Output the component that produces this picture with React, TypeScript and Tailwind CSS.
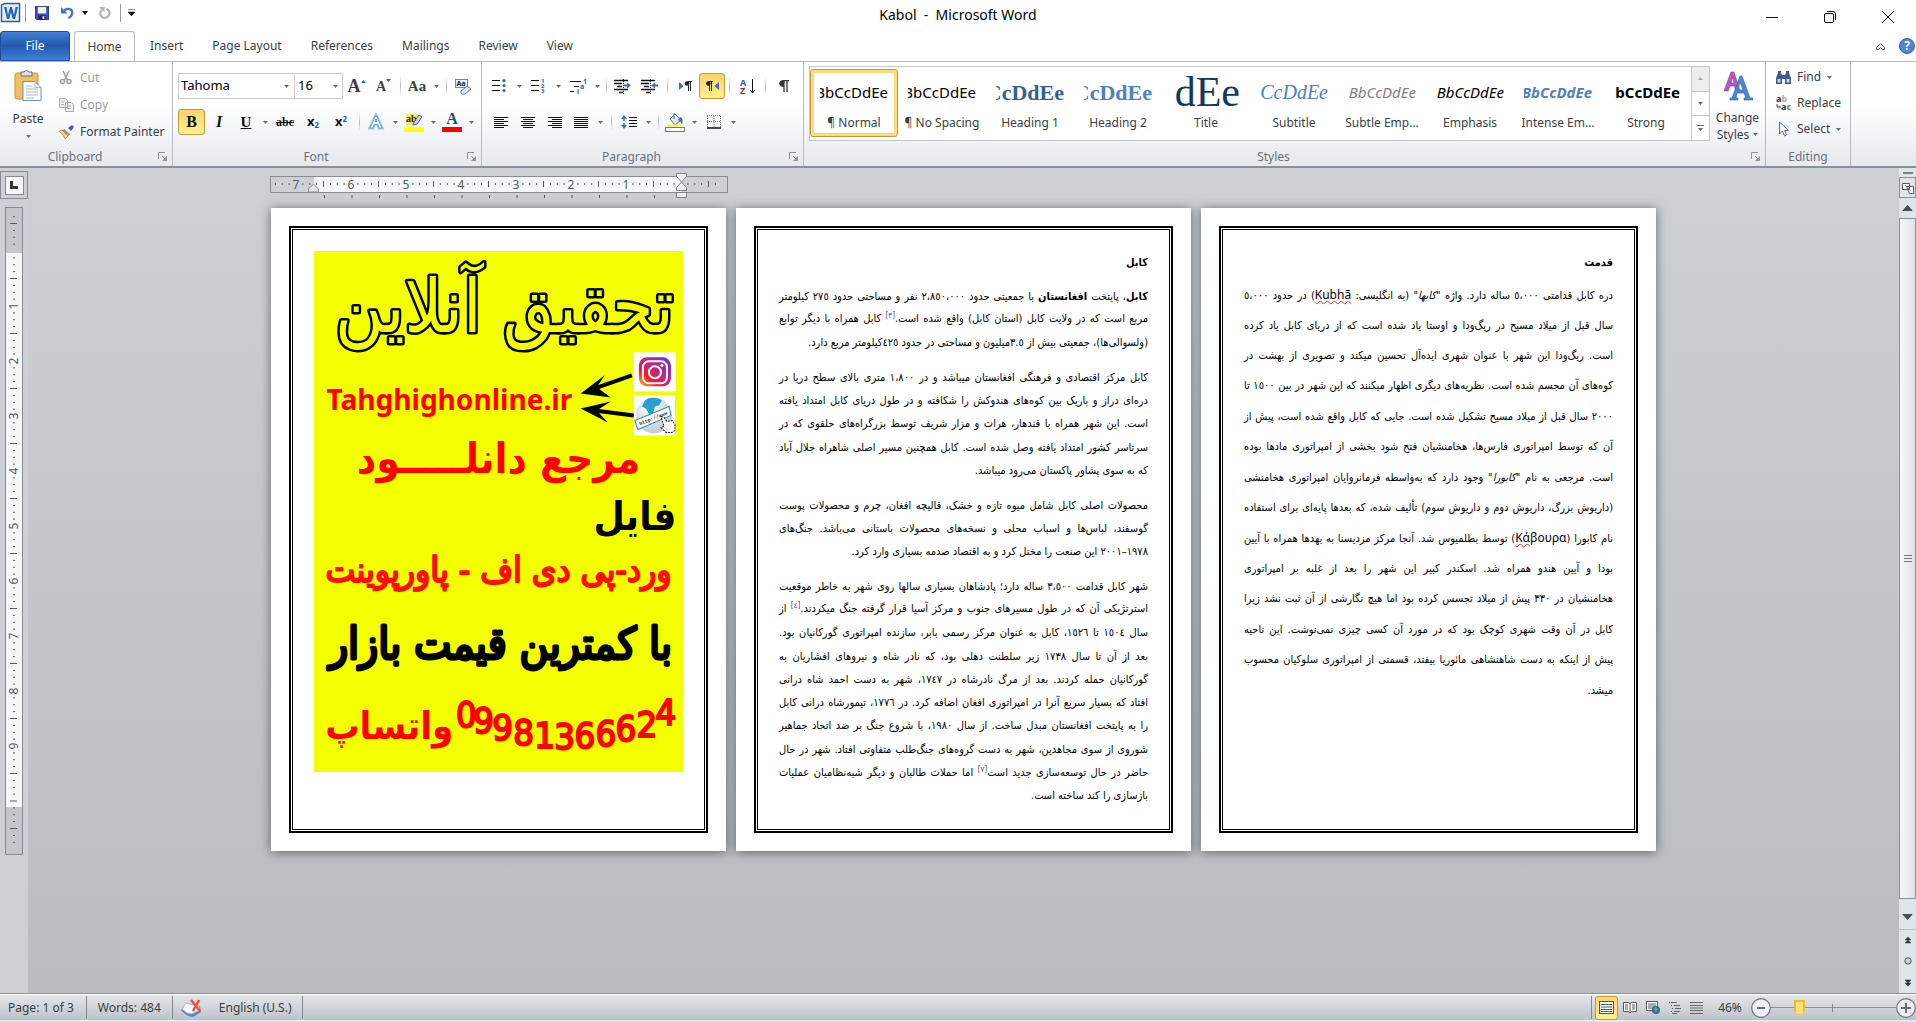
import type { ReactNode } from "react";

const TABS = ["Insert", "Page Layout", "References", "Mailings", "Review", "View"];

const STYLES = [
  { name: "¶ Normal", sample: "BbCcDdEe", look: "text-[15px] text-black" },
  { name: "¶ No Spacing", sample: "BbCcDdEe", look: "text-[15px] text-black" },
  { name: "Heading 1", sample: "CcDdEe", look: "font-['Liberation_Serif',serif] text-[22px] font-bold text-[#365f91]" },
  { name: "Heading 2", sample: "CcDdEe", look: "font-['Liberation_Serif',serif] text-[22px] font-bold text-[#4f81bd]" },
  { name: "Title", sample: "dEe", look: "font-['Liberation_Serif',serif] text-[42px] leading-[30px] text-[#17365d]" },
  { name: "Subtitle", sample: "CcDdEe", look: "font-['Liberation_Serif',serif] text-[20px] italic text-[#4f81bd]" },
  { name: "Subtle Emp...", sample: "BbCcDdEe", look: "text-[15px] italic text-[#808080]" },
  { name: "Emphasis", sample: "BbCcDdEe", look: "text-[15px] italic text-black" },
  { name: "Intense Em...", sample: "BbCcDdEe", look: "text-[15px] font-bold italic text-[#4f81bd]" },
  { name: "Strong", sample: "bCcDdEe", look: "text-[15px] font-bold text-black" },
];

const KABUL: { height: string; lines: ReactNode[] }[] = [
  {
    height: "h-[70px]",
    lines: [
      <>
        <b>کابل</b>، پایتخت <b>افغانستان</b> با جمعیتی حدود ٢،٨٥٠،٠٠٠ نفر و مساحتی حدود ٢٧٥ کیلومتر
      </>,
      <>
        مربع است که در ولایت کابل (استان کابل) واقع شده است.<Note>[٣]</Note> کابل همراه با دیگر توابع
      </>,
      "(ولسوالی‌ها)، جمعیتی بیش از ٣.٥میلیون و مساحتی در حدود ٤٢٥کیلومتر مربع دارد.",
    ],
  },
  {
    height: "h-[117px]",
    lines: [
      "کابل مرکز اقتصادی و فرهنگی افغانستان میباشد و در ١،٨٠٠ متری بالای سطح دریا در",
      "دره‌ای دراز و باریک بین کوه‌های هندوکش را شکافته و در طول دریای کابل امتداد یافته",
      "است. این شهر همراه با قندهار، هرات و مزار شریف توسط بزرگراه‌های حلقوی که در",
      "سرتاسر کشور امتداد یافته وصل شده است. کابل همچنین مسیر اصلی شاهراه جلال آباد",
      "که به سوی پشاور پاکستان می‌رود میباشد.",
    ],
  },
  {
    height: "h-[70px]",
    lines: [
      "محصولات اصلی کابل شامل میوه تازه و خشک، قالیچه افغان، چرم و محصولات پوست",
      "گوسفند، لباس‌ها و اسباب محلی و نسخه‌های محصولات باستانی می‌باشد. جنگ‌های",
      "١٩٧٨–٢٠٠١ این صنعت را مختل کرد و به اقتصاد صدمه بسیاری وارد کرد.",
    ],
  },
  {
    height: "h-[233px]",
    lines: [
      "شهر کابل قدامت ٣،٥٠٠ ساله دارد؛ پادشاهان بسیاری سالها روی شهر به خاطر موقعیت",
      <>
        استرتژیکی آن که در طول مسیرهای جنوب و مرکز آسیا قرار گرفته جنگ میکردند.<Note>[٤]</Note> از
      </>,
      "سال ١٥٠٤ تا ١٥٢٦، کابل به عنوان مرکز رسمی بابر، سازنده امپراتوری گورکانیان بود.",
      "بعد از آن تا سال ١٧٣٨ زیر سلطنت دهلی بود، که نادر شاه و نیروهای افشاریان به",
      "گورکانیان حمله کردند. بعد از مرگ نادرشاه در ١٧٤٧، شهر به دست احمد شاه درانی",
      "افتاد که بسیار سریع آنرا در امپراتوری افغان اضافه کرد. در ١٧٧٦، تیمورشاه درانی کابل",
      "را به پایتخت افغانستان مبدل ساخت. از سال ١٩٨٠، با شروع جنگ بر ضد اتحاد جماهیر",
      "شوروی از سوی مجاهدین، شهر به دست گروه‌های جنگ‌طلب متفاوتی افتاد. شهر در حال",
      <>
        حاضر در حال توسعه‌سازی جدید است<Note>[٧]</Note> اما حملات طالبان و دیگر شبه‌نظامیان عملیات
      </>,
      "بازسازی را کند ساخته است.",
    ],
  },
];

const HISTORY: ReactNode[] = [
  <>
    دره کابل قدامتی ٥،٠٠٠ ساله دارد. واژه "<i>کابها</i>" (به انگلیسی:{" "}
    <Latin>
      <Misspelt>Kubhā</Misspelt>
    </Latin>
    ) در حدود ٥،٠٠٠
  </>,
  "سال قبل از میلاد مسیح در ریگ‌ودا و اوستا یاد شده است که از دریای کابل یاد کرده",
  "است. ریگ‌ودا این شهر با عنوان شهری ایده‌آل تحسین میکند و تصویری از بهشت در",
  "کوه‌های آن مجسم شده است. نظریه‌های دیگری اظهار میکنند که این شهر در بین ١٥٠٠ تا",
  "٢٠٠٠ سال قبل از میلاد مسیح تشکیل شده است. جایی که کابل واقع شده است، پیش از",
  "آن که توسط امپراتوری فارس‌ها، هخامنشیان فتح شود بخشی از امپراتوری مادها بوده",
  <>
    است. مرجعی به نام "<i>کابورا</i>" وجود دارد که به‌واسطه فرمانروایان امپراتوری هخامنشی
  </>,
  "(داریوش بزرگ، داریوش دوم و داریوش سوم) تألیف شده، که بعدها پایه‌ای برای استفاده",
  <>
    نام کابورا (
    <Latin>
      <Misspelt>Κά</Misspelt>βουρα
    </Latin>
    ) توسط بطلمیوس شد. آنجا مرکز مزدیسنا به بهدها همراه با آیین
  </>,
  "بودا و آیین هندو همراه شد. اسکندر کبیر این شهر را بعد از غلبه بر امپراتوری",
  "هخامنشیان در ٣٣٠ پیش از میلاد تجسس کرده بود اما هیچ نگارشی از آن ثبت نشد زیرا",
  "کابل در آن وقت شهری کوچک بود که در مورد آن کسی چیزی نمی‌نوشت. این ناحیه",
  "پیش از اینکه به دست شاهنشاهی مائوریا بیفتد، قسمتی از امپراتوری سلوکیان محسوب",
  "میشد.",
];

const PHONE = [
  ["0", 152, 475],
  ["9", 169, 481],
  ["9", 188, 488],
  ["8", 209, 493],
  ["1", 230, 496],
  ["3", 250, 497],
  ["6", 270, 496],
  ["6", 291, 494],
  ["6", 311, 489],
  ["2", 332, 485],
  ["4", 351, 473],
] as const;

function Note({ children }: { children: ReactNode }) {
  return <span className="relative -top-1 text-[8px] text-[#4a4a78]">{children}</span>;
}

function Latin({ children }: { children: ReactNode }) {
  return (
    <bdi dir="ltr" className="font-['Noto_Sans',sans-serif] text-[12px]">
      {children}
    </bdi>
  );
}

function Misspelt({ children }: { children: ReactNode }) {
  return <span className="underline decoration-red-500 decoration-wavy decoration-1">{children}</span>;
}

function Caret() {
  return (
    <svg width="5" height="3" viewBox="0 0 5 3" className="shrink-0">
      <path d="M0 0h5L2.5 3z" fill="#6b6b6b" />
    </svg>
  );
}

function Launcher() {
  return (
    <svg width="9" height="9" viewBox="0 0 9 9">
      <path d="M.5 7V.5H7M4 4l3 3" stroke="#8f949b" fill="none" />
      <path d="M9 4v5H4l2-2 1-1z" fill="#8f949b" />
    </svg>
  );
}

function Sep({ w = "w-[5px]" }: { w?: string }) {
  return (
    <span className={`flex h-5 shrink-0 justify-center ${w}`}>
      <span className="w-px bg-linear-to-b from-white via-[#b4b8be] to-white" />
    </span>
  );
}

function Tool({ label, w = "w-[27px]", on = false, children }: { label: string; w?: string; on?: boolean; children: ReactNode }) {
  return (
    <button
      aria-label={label}
      className={`flex h-[26px] shrink-0 items-center justify-center ${w} ${
        on ? "rounded-[3px] border border-[#c29a3c] bg-linear-to-b from-[#fbd36b] to-[#fff08a]" : ""
      }`}
    >
      {children}
    </button>
  );
}

function Split({ label, caret = "w-[13px]", children }: { label: string; caret?: string; children: ReactNode }) {
  return (
    <span className="flex shrink-0 items-center">
      <Tool label={label} w="w-[26px]">
        {children}
      </Tool>
      <button aria-label={`${label} options`} className={`flex h-[26px] items-center justify-center ${caret}`}>
        <Caret />
      </button>
    </span>
  );
}

function Group({ title, w, launcher = true, children }: { title: string; w: string; launcher?: boolean; children: ReactNode }) {
  return (
    <section className={`flex flex-col border-r border-[#b8bcc2] ${w}`}>
      <div className="flex h-[84px]">{children}</div>
      <div className="flex h-5 items-center pt-px text-[#6a7180]">
        <span className={launcher ? "flex-1 pr-2 text-center" : "flex-1 text-center"}>{title}</span>
        {launcher && (
          <button aria-label={`${title} settings`} className="mr-[5px]">
            <Launcher />
          </button>
        )}
      </div>
    </section>
  );
}

/* rows: [x1, x2] of each stroke, 2px apart */
function Lines({ rows }: { rows: [number, number][] }) {
  return (
    <svg width="14" height="13" viewBox="0 0 14 13" shapeRendering="crispEdges">
      {rows.map(([a, b], i) => (
        <path key={i} d={`M${a} ${i * 2 + 1}.5H${b}`} stroke="#111" />
      ))}
    </svg>
  );
}

function ListIcon({ marks }: { marks: string[] }) {
  return (
    <svg width="16" height="16" viewBox="0 0 16 16">
      {marks.map((m, i) => (
        <g key={i}>
          <path d={`M0 ${2.5 + i * 5}h8`} stroke="#111" />
          {m === "•" ? (
            <circle cx="12" cy={2.5 + i * 5} r="1.6" fill="#2f62b5" />
          ) : (
            <text x="10" y={5 + i * 5} fontSize="6" fontWeight="700" fill="#2f62b5">
              {m}
            </text>
          )}
        </g>
      ))}
    </svg>
  );
}

function IndentIcon({ flip = false }: { flip?: boolean }) {
  return (
    <svg width="17" height="15" viewBox="0 0 17 15">
      <path d="M0 1.500h14M0 4.500h8M3 7.500h5M0 10.500h14M5 13.500h4" stroke="#111" strokeWidth="1.500" />
      <path d="M9.500 0v15" stroke="#111" strokeDasharray="1 1" />
      <path d={flip ? "M10 6.500l4-3v2h3v2h-3v2z" : "M17 6.500l-4-3v2h-3v2h3v2z"} fill="#3b6fc4" />
    </svg>
  );
}

function Ruler() {
  const ticks = [];
  for (let i = -5; i <= 62; i++) {
    const x = 411 - i * 6.875;
    if (x < 4 || x > 454) continue;
    if (i % 8 === 0 && i !== 0) {
      ticks.push(
        <text key={i} x={x} y="16" textAnchor="middle" fontSize="12" fill="#555a63">
          {i / 8}
        </text>,
      );
    } else if (i !== 0) {
      ticks.push(<path key={i} d={`M${x} ${i % 4 === 0 ? 8 : 10}v${i % 4 === 0 ? 6 : 2}`} stroke="#555a63" />);
    }
  }
  return (
    <svg width="458" height="27" viewBox="0 0 458 27" className="-ml-px block max-w-none">
      <rect x=".5" y="3.500" width="457" height="16" fill="#cdd0d5" stroke="#868b94" />
      <rect x="44" y="4" width="368" height="15" fill="#f6f7f8" />
      {ticks}
      {Array.from({ length: 13 }, (_, i) => (
        <path key={i} d={`M${54.5 + i * 27.500} 22v3`} stroke="#555a63" />
      ))}
      <path d="M38.500 19v-3l5-5 5 5v3z" fill="#e3e5e8" stroke="#868b94" />
      <path d="M406.500.5h10v3l-5 5.500 5 5.500v3h-10v-3l5-5.500-5-5.500z" fill="#eceef0" stroke="#7d828b" />
      <rect x="406.500" y="19.500" width="10" height="5" fill="#eceef0" stroke="#7d828b" />
    </svg>
  );
}

function SideRuler() {
  const ticks = [];
  for (let i = -5; i <= 86; i++) {
    const y = 44 + i * 6.875;
    if (i === 0 || y > 644) continue;
    if (i % 8 === 0 && i < 80) {
      ticks.push(
        <text key={i} transform={`translate(13 ${y}) rotate(-90)`} textAnchor="middle" fontSize="12" fill="#555a63">
          {i / 8}
        </text>,
      );
    } else {
      ticks.push(<path key={i} d={`M${i % 4 === 0 ? 5 : 8} ${y}h${i % 4 === 0 ? 7 : 2}`} stroke="#555a63" />);
    }
  }
  return (
    <svg width="18" height="648" viewBox="0 0 18 648">
      <rect x=".5" y=".5" width="17" height="647" fill="#c3c7cc" stroke="#868b94" />
      <rect x="1" y="46" width="16" height="554" fill="#f6f7f8" />
      {ticks}
    </svg>
  );
}

function Poster() {
  return (
    <svg viewBox="0 0 368 520" className="block w-full font-['DejaVu_Sans_Condensed','DejaVu_Sans',sans-serif]">
      <defs>
        <linearGradient id="insta" x1="0" y1="1" x2="1" y2="0">
          <stop offset="0" stopColor="#fdc21f" />
          <stop offset=".3" stopColor="#f5172f" />
          <stop offset=".6" stopColor="#b52b8f" />
          <stop offset="1" stopColor="#5b3fc4" />
        </linearGradient>
        <radialGradient id="globe" cx=".4" cy=".3" r=".8">
          <stop offset="0" stopColor="#ffffff" />
          <stop offset="1" stopColor="#b9c3cc" />
        </radialGradient>
      </defs>
      <rect width="368" height="520" fill="#f3ff00" />
      <g direction="rtl" textAnchor="middle" strokeLinejoin="round">
        <text x="190" y="81" fontSize="74" fill="#f3ff00" stroke="#000" strokeWidth="5" paintOrder="stroke">
          تحقیق آنلاین
        </text>
        <text x="184" y="221" fontSize="42" fontWeight="700" fill="#f00">
          مرجع دانلـــــود
        </text>
        <text x="320" y="278" fontSize="40" fontWeight="700" fill="#000">
          فایل
        </text>
        <text x="184" y="330" fontSize="35" fill="#ff0d0d" stroke="#ff0d0d" strokeWidth="2">
          ورد-پی دی اف - پاورپوینت
        </text>
        <text x="186" y="407" fontSize="44" fill="#000" stroke="#000" strokeWidth="3">
          با کمترین قیمت بازار
        </text>
        <text x="75" y="487" fontSize="38" fontWeight="700" fill="#f00">
          واتساپ
        </text>
      </g>
      <text x="135" y="159" textAnchor="middle" fontSize="28" fontWeight="700" fill="#f00" className="font-['Noto_Sans',sans-serif]">
        Tahghighonline.ir
      </text>
      <g textAnchor="middle" fontSize="36" fill="#f00" stroke="#f00" strokeWidth="2">
        {PHONE.map(([d, x, y], i) => (
          <text key={i} x={x} y={y}>
            {d}
          </text>
        ))}
      </g>
      <path d="M317 124L280 137M319 164L280 159" stroke="#000" strokeWidth="4" />
      <path d="M266 142l24-18-8 12 14 10zM266 157l30-7-14 9 11 12z" fill="#000" />
      <rect x="319" y="101" width="42" height="39" fill="#fff" />
      <rect x="324" y="106" width="32" height="29" rx="8" fill="url(#insta)" />
      <rect x="328" y="110" width="24" height="22" rx="6" fill="none" stroke="#fff" strokeWidth="2" />
      <circle cx="340" cy="121" r="6" fill="none" stroke="#fff" strokeWidth="2" />
      <circle cx="347" cy="114" r="1.500" fill="#fff" />
      <rect x="319" y="144" width="41" height="40" fill="#fff" />
      <circle cx="339" cy="164" r="18" fill="url(#globe)" />
      <path d="M330 149c5-4 13-3 17 0l-3 5-4 1-2 8-3 1-4-7-4-2z" fill="#27a0cf" />
      <path d="M320 169l34-14 2 9-33 14z" fill="#fff" stroke="#2c8fb8" />
      <text transform="translate(325 174) rotate(-22)" fontSize="5" fontWeight="700" fill="#222" className="font-['Liberation_Mono',monospace]">
        http://www
      </text>
      <path d="M346 165l3 1 3 4 5-1 3 4v6l-3 2h-6l-5-5 3-1z" fill="#fff" stroke="#222" strokeDasharray="2 1" />
    </svg>
  );
}

function Sheet({ children }: { children: ReactNode }) {
  return (
    <article className="h-[643px] bg-white p-[18px] shadow-[0_1px_10px_rgba(30,34,40,0.6)]">
      <div className="h-full border-2 border-black p-px">
        <div className="h-full border border-black px-[21px] py-[21px]">{children}</div>
      </div>
    </article>
  );
}

function Para({ lines, size }: { lines: ReactNode[]; size: string }) {
  return (
    <div className={`grid auto-rows-fr items-center ${size}`}>
      {lines.map((line, i) => (
        <p key={i} className={i < lines.length - 1 ? "leading-4 whitespace-nowrap [text-align-last:justify]" : "leading-4 whitespace-nowrap"}>
          {line}
        </p>
      ))}
    </div>
  );
}

function Ribbon() {
  return (
    <div className="flex border-t border-b-2 border-t-[#b6babf] border-b-[#8b9097] bg-linear-to-b from-white from-40% to-[#e6e9ed]">
      <Group title="Clipboard" w="w-[173px]">
        <button className="flex w-[56px] flex-col items-center pt-2">
          <svg width="28" height="31" viewBox="0 0 28 31">
            <rect x="1" y="3" width="23" height="26" rx="2" fill="#efbd63" stroke="#c9953d" />
            <path d="M7 2h3a3 3 0 015 0h3v4H7z" fill="#dcdfe2" stroke="#6b7077" />
            <path d="M9 11.500h12l6 6v13H9z" fill="#fff" stroke="#6f8fbf" />
            <path d="M21 11.500v6h6M12 16h6M12 19h12M12 22h12M12 25h12M12 28h8" stroke="#9db4d6" fill="none" />
          </svg>
          <span className="mt-[10px] mb-2 leading-4">Paste</span>
          <Caret />
        </button>
        <div className="flex flex-col pt-[2px]">
          <button className="flex h-[27px] items-center gap-[6px] pl-[3px] text-[#9a9da2]">
            <svg width="15" height="15" viewBox="0 0 15 15" fill="none" stroke="#9a9da2" strokeWidth="1.500">
              <path d="M4 1l4.500 9M10 1L5.500 10" />
              <circle cx="3.500" cy="11.500" r="2" />
              <circle cx="10" cy="11.500" r="2" />
            </svg>
            Cut
          </button>
          <button className="flex h-[27px] items-center gap-[6px] pl-[3px] text-[#9a9da2]">
            <svg width="15" height="14" viewBox="0 0 15 14" fill="#f1f1f1" stroke="#a9acb0">
              <path d="M.5.500h6l2 2v7h-8zM6.500 4.500h6l2 2v7h-8zM8 8h4M8 10.500h4M2 4h3M2 6.500h3" />
            </svg>
            Copy
          </button>
          <button className="flex h-[27px] items-center gap-[6px] pl-[3px]">
            <svg width="15" height="14" viewBox="0 0 15 14">
              <path d="M9 3l4-3 2 2-3 4z" fill="#4b5bb0" />
              <path d="M5 4l6 5-1 2-7-5z" fill="#8d939b" />
              <path d="M0 6l3-1 6 6-3 3c-1-3-3-5-6-8z" fill="#f3d36c" stroke="#a3873c" strokeWidth=".7" />
            </svg>
            <span className="whitespace-nowrap">Format Painter</span>
          </button>
        </div>
      </Group>

      <Group title="Font" w="w-[309px]">
        <div className="flex flex-col gap-[10px] pt-[11px] pl-[5px]">
          <div className="flex h-[26px] items-center">
            <label className="flex h-[26px] w-[117px] items-center border border-[#c9ccd0] bg-white pr-[5px]">
              <select aria-label="Font" className="flex-1 appearance-none pl-[2px] text-[13px] text-black">
                <option>Tahoma</option>
              </select>
              <Caret />
            </label>
            <label className="-ml-px flex h-[26px] w-[49px] items-center border border-[#c9ccd0] bg-white pr-1">
              <select aria-label="Font size" className="w-[38px] appearance-none pl-[3px] text-[13px] text-black">
                <option>16</option>
              </select>
              <Caret />
            </label>
            <Tool label="Grow font">
              <span className="font-['Liberation_Serif',serif] text-[18px] font-bold">A</span>
              <svg width="5" height="12" viewBox="0 0 5 12">
                <path d="M0 3h5L2.500 0z" fill="#2f62b5" />
              </svg>
            </Tool>
            <Tool label="Shrink font">
              <span className="font-['Liberation_Serif',serif] text-[14px] font-bold">A</span>
              <svg width="5" height="14" viewBox="0 0 5 14">
                <path d="M0 0h5L2.500 3z" fill="#2f62b5" />
              </svg>
            </Tool>
            <Sep w="w-[7px]" />
            <Split label="Change case">
              <span className="font-['Liberation_Serif',serif] text-[15px] font-bold">Aa</span>
            </Split>
            <Sep w="w-[7px]" />
            <Tool label="Clear formatting">
              <svg width="17" height="17" viewBox="0 0 17 17">
                <rect x=".5" y="1.500" width="12" height="8" fill="#e6eefa" stroke="#6b87b8" />
                <text x="1.500" y="8" fontSize="7" fontWeight="700" fill="#222">
                  Aa
                </text>
                <path d="M6 13l6-5 4 3-6 5c-2 1-5-1-4-3z" fill="#dfe6f5" stroke="#6274a8" />
              </svg>
            </Tool>
          </div>
          <div className="flex h-[26px] items-center font-['Liberation_Serif',serif] text-[#111]">
            <Tool label="Bold" on>
              <span className="text-[16px] font-bold">B</span>
            </Tool>
            <Tool label="Italic" w="w-[28px]">
              <span className="text-[16px] font-bold italic">I</span>
            </Tool>
            <Split label="Underline" caret="w-[12px]">
              <span className="text-[15px] font-bold underline">U</span>
            </Split>
            <Tool label="Strikethrough" w="w-[28px]">
              <span className="text-[12px] font-bold line-through">abc</span>
            </Tool>
            <Tool label="Subscript" w="w-[28px]">
              <span className="font-['Noto_Sans',sans-serif] text-[13px] font-bold">
                x<sub className="text-[8px] text-[#2f62b5]">2</sub>
              </span>
            </Tool>
            <Tool label="Superscript" w="w-[28px]">
              <span className="font-['Noto_Sans',sans-serif] text-[13px] font-bold">
                x<sup className="text-[8px] text-[#2f62b5]">2</sup>
              </span>
            </Tool>
            <Sep w="w-[8px]" />
            <Split label="Text effects" caret="w-[12px]">
              <svg width="18" height="18" viewBox="0 0 18 18">
                <path d="M3 15L9 2l6 13h-3l-1-3.500H7L6 15zM8 8.500h2L9 6z" fill="#fff" stroke="#9cc9ee" strokeWidth="3" />
                <path d="M3 15L9 2l6 13h-3l-1-3.500H7L6 15zM8 8.500h2L9 6z" fill="#fff" stroke="#4d93d0" strokeWidth=".8" />
              </svg>
            </Split>
            <Split label="Highlight" caret="w-[12px]">
              <svg width="20" height="20" viewBox="0 0 20 20">
                <rect x="2" y="2" width="11" height="11" fill="#f7ee66" />
                <text x="2" y="10" fontSize="10" fontWeight="700" fill="#222">
                  ab
                </text>
                <path d="M10 10l5-7 3 2-5 7-4 1z" fill="#c9d6ee" stroke="#4d5f8f" />
                <rect y="15" width="20" height="5" fill="#ff0" />
              </svg>
            </Split>
            <Split label="Font color" caret="w-[12px]">
              <svg width="20" height="20" viewBox="0 0 20 20">
                <text x="10" y="12" textAnchor="middle" fontSize="16" fontWeight="700" fill="#2a4a86">
                  A
                </text>
                <rect y="15" width="20" height="5" fill="#f00" />
              </svg>
            </Split>
          </div>
        </div>
      </Group>

      <Group title="Paragraph" w="w-[322px]">
        <div className="flex flex-col gap-[10px] pt-[11px] pl-[5px]">
          <div className="flex h-[26px] items-center">
            <Split label="Bullets">
              <ListIcon marks={["•", "•", "•"]} />
            </Split>
            <Split label="Numbering">
              <ListIcon marks={["1", "2", "3"]} />
            </Split>
            <Split label="Multilevel list">
              <svg width="17" height="16" viewBox="0 0 17 16" fontSize="7" fontWeight="700" fill="#2f62b5">
                <path d="M0 3.500h11M4 8.500h5M0 13.500h4" stroke="#111" />
                <text x="13" y="6">
                  1
                </text>
                <text x="10" y="11">
                  a
                </text>
                <text x="7" y="16">
                  i
                </text>
              </svg>
            </Split>
            <Sep />
            <Tool label="Decrease indent">
              <IndentIcon />
            </Tool>
            <Tool label="Increase indent">
              <IndentIcon flip />
            </Tool>
            <Sep w="w-[9px]" />
            <Tool label="Left-to-right">
              <svg width="13" height="10" viewBox="0 0 13 10">
                <path d="M0 1l4.500 4L0 9z" fill="#3b6fc4" />
                <path d="M9.500 1v9M11.500 1v9M13 .5H8.500" stroke="#222" />
                <circle cx="8" cy="2.500" r="2.300" fill="#222" />
              </svg>
            </Tool>
            <Tool label="Right-to-left" w="w-[26px]" on>
              <svg width="13" height="10" viewBox="0 0 13 10">
                <path d="M13 1L8.500 5 13 9z" fill="#3b6fc4" />
                <path d="M3.500 1v9M5.500 1v9M7 .5H2.500" stroke="#222" />
                <circle cx="2.300" cy="2.500" r="2.300" fill="#222" />
              </svg>
            </Tool>
            <Sep w="w-[9px]" />
            <Tool label="Sort">
              <svg width="16" height="17" viewBox="0 0 16 17" fontSize="9" fontWeight="700">
                <text y="8" fill="#2f62b5">
                  A
                </text>
                <text y="16" fill="#9c2b2b">
                  Z
                </text>
                <path d="M12.500 1v14M10 12l2.500 3 2.500-3" stroke="#111" fill="none" />
              </svg>
            </Tool>
            <Sep w="w-[9px]" />
            <Tool label="Show marks">
              <svg width="10" height="12" viewBox="0 0 10 12">
                <path d="M5 1v11M8 1v11M10 .7H4" stroke="#333" strokeWidth="1.300" />
                <path d="M5 0v7C-1.500 7-1.500 0 5 0z" fill="#333" />
              </svg>
            </Tool>
          </div>
          <div className="flex h-[26px] items-center">
            <Tool label="Align left">
              <Lines rows={[[0, 14], [0, 10], [0, 14], [0, 10], [0, 14], [0, 10]]} />
            </Tool>
            <Tool label="Center">
              <Lines rows={[[0, 14], [2, 12], [0, 14], [2, 12], [0, 14], [2, 12]]} />
            </Tool>
            <Tool label="Align right">
              <Lines rows={[[0, 14], [4, 14], [0, 14], [4, 14], [0, 14], [4, 14]]} />
            </Tool>
            <Split label="Justify">
              <Lines rows={[[0, 14], [0, 14], [0, 14], [0, 14], [0, 14], [0, 14]]} />
            </Split>
            <Sep w="w-[9px]" />
            <Split label="Line spacing">
              <svg width="16" height="16" viewBox="0 0 16 16">
                <path d="M0 5l3-4 3 4zM0 11l3 4 3-4z" fill="#3b6fc4" />
                <path d="M3 4v3M3 9v3" stroke="#3b6fc4" strokeWidth="1.500" />
                <path d="M8 3.500h8M8 6.500h8M8 9.500h8M8 12.500h8" stroke="#111" />
              </svg>
            </Split>
            <Sep w="w-[7px]" />
            <Split label="Shading">
              <svg width="20" height="20" viewBox="0 0 20 20">
                <path d="M5 7l5-5 6 6-6 5z" fill="#dbe5f3" stroke="#5b6f93" />
                <path d="M9 1v6" stroke="#5b6f93" />
                <path d="M15 5c3 1 3 4 2 8-1-3-2-4-4-5z" fill="#3b6fc4" />
                <path d="M2 13.500h15" stroke="#ff0" strokeWidth="2" />
                <rect x=".5" y="15.500" width="19" height="4" fill="#fff" stroke="#777" />
              </svg>
            </Split>
            <Split label="Borders">
              <svg width="14" height="14" viewBox="0 0 14 14">
                <path d="M.5 1v11M7 1v11M13.500 1v11M0 .5h14M0 6.500h14" stroke="#777" strokeDasharray="1 1" />
                <path d="M0 13h14" stroke="#111" strokeWidth="1.500" />
              </svg>
            </Split>
          </div>
        </div>
      </Group>

      <Group title="Styles" w="max-w-[962px] flex-1">
        <div className="flex flex-1 pt-1 pl-[5px]">
          <div className="flex h-[75px] min-w-0 flex-1 overflow-hidden border border-[#c3c6ca] bg-white">
            {STYLES.map((s, i) => (
              <button
                key={s.name}
                className={`mt-[2px] flex h-[68px] w-[88px] shrink-0 flex-col items-center ${
                  i === 0 ? "rounded-[3px] border border-[#c29a3c] ring-[3px] ring-[#fddb75] ring-inset" : "border border-transparent"
                }`}
              >
                <span className="mt-[5px] flex h-[34px] w-[68px] items-center justify-end overflow-hidden">
                  <span className={s.look}>{s.sample}</span>
                </span>
                <span className="mt-[6px] leading-4 whitespace-nowrap">{s.name}</span>
              </button>
            ))}
          </div>
          <div className="flex h-[75px] w-[18px] flex-col border border-l-0 border-[#c3c6ca] bg-white">
            <button aria-label="Previous styles" className="flex flex-1 items-center justify-center bg-[#eceded]">
              <svg width="5" height="3" viewBox="0 0 5 3">
                <path d="M0 3h5L2.500 0z" fill="#a5a8ac" />
              </svg>
            </button>
            <button aria-label="Next styles" className="flex flex-1 items-center justify-center border-y border-[#c3c6ca]">
              <Caret />
            </button>
            <button aria-label="More styles" className="flex flex-1 flex-col items-center justify-center gap-[2px]">
              <span className="h-px w-[7px] bg-[#6b6b6b]" />
              <Caret />
            </button>
          </div>
        </div>
        <button className="flex w-[55px] flex-col items-center pt-[9px]">
          <svg width="30" height="30" viewBox="0 0 30 30">
            <path d="M1 20L8 1h3l6 19h-4l-1.500-5H7l-2 5zM8 12h3l-1-6z" fill="#b857bd" stroke="#8a3a93" strokeWidth=".6" />
            <path d="M7 29v-2h2L17 5h2l8 22h3v2h-9v-2h2l-2-5h-7l-1 5h2v2zM15 19h5l-3-8z" fill="#4f86d4" stroke="#2f5da3" strokeWidth=".6" />
          </svg>
          <span className="mt-2 leading-[17px]">Change</span>
          <span className="flex items-center gap-1 leading-[17px]">
            Styles <Caret />
          </span>
        </button>
      </Group>

      <Group title="Editing" w="w-[85px]" launcher={false}>
        <div className="flex flex-col pt-[2px] pl-[10px]">
          <button className="flex h-[26px] items-center gap-[6px]">
            <svg width="15" height="14" viewBox="0 0 15 14">
              <path d="M2 3V1h3v2l1 2h3l1-2V1h3v2l2 5v6H9V9H6v5H0V8z" fill="#3d5a94" />
              <path d="M1.500 9h3v3.500h-3zM10.500 9h3v3.500h-3z" fill="#c5d5ee" />
            </svg>
            Find <Caret />
          </button>
          <button className="flex h-[26px] items-center gap-[6px]">
            <svg width="15" height="16" viewBox="0 0 15 16" fontSize="9" fontWeight="700">
              <text x="0" y="7" fill="#333">
                a<tspan fill="#aaa">b</tspan>
              </text>
              <text x="5" y="15" fill="#333">
                a<tspan fill="#2b9a33">c</tspan>
              </text>
              <path d="M1 9v3h3M3 10.500l1.500 1.500L3 13.500" stroke="#2f4f93" fill="none" />
            </svg>
            Replace
          </button>
          <button className="flex h-[26px] items-center gap-[6px]">
            <svg width="15" height="16" viewBox="0 0 15 16">
              <path d="M3.500 1v12l3-3 2 5 2-1-2-4.500h4z" fill="#fff" stroke="#5470a3" />
            </svg>
            Select <Caret />
          </button>
        </div>
      </Group>
    </div>
  );
}

function TitleBar() {
  return (
    <header className="flex h-[31px] items-start justify-between">
      <div className="flex w-[200px] items-center pt-[2px]">
        <svg width="21" height="21" viewBox="0 0 21 21">
          <path d="M1.500 3l3-1.500h15v18h-18z" fill="#e4effb" stroke="#2b5ba9" strokeWidth="1.500" />
          <path d="M4 5h2.500l1.500 8 2-8h2l2 8 1.500-8H18l-3 12h-2.300L11 10l-1.800 7H7z" fill="#1f66bd" />
        </svg>
        <span className="ml-1 h-[18px] w-px bg-[#999]" />
        <button aria-label="Save" className="ml-[9px]">
          <svg width="14" height="14" viewBox="0 0 15 15">
            <path d="M.5.5h14v14h-13l-1-1z" fill="#3f49b5" stroke="#2b3187" />
            <rect x="3" y="1" width="9" height="7" fill="#eef1fa" />
            <rect x="4" y="10" width="7" height="5" fill="#1d2357" />
            <rect x="8" y="11" width="2" height="3" fill="#fff" />
          </svg>
        </button>
        <button aria-label="Undo" className="ml-[12px]">
          <svg width="13" height="13" viewBox="0 0 14 14">
            <path d="M3 6c2-4 9-4 9 1 0 3-2 5-4 6" stroke="#3f74cf" strokeWidth="2.500" fill="none" />
            <path d="M0 1v7h7z" fill="#3f74cf" />
          </svg>
        </button>
        <span className="ml-[8px]">
          <svg width="6" height="4" viewBox="0 0 6 4">
            <path d="M0 0h6L3 4z" fill="#111" />
          </svg>
        </span>
        <button aria-label="Repeat" className="ml-[11px]">
          <svg width="12" height="12" viewBox="0 0 13 13">
            <path d="M8 2a5 5 0 11-5 1" stroke="#b5b5b5" strokeWidth="2.500" fill="none" />
            <path d="M0 0h6v6z" fill="#b5b5b5" />
          </svg>
        </button>
        <span className="ml-[9px] h-[18px] w-px bg-[#999]" />
        <button aria-label="Customize toolbar" className="ml-[7px]">
          <svg width="7" height="7" viewBox="0 0 7 7">
            <path d="M0 .7h7M0 3h7L3.500 7z" fill="#111" stroke="#111" strokeWidth=".5" />
          </svg>
        </button>
      </div>
      <h1 className="pt-[5px] text-[14px] leading-5 text-black">Kabol &nbsp;-&nbsp; Microsoft Word</h1>
      <div className="flex w-[200px] items-center justify-end gap-[46px] pt-[11px] pr-[22px]">
        <button aria-label="Minimize">
          <svg width="12" height="12" viewBox="0 0 12 12">
            <path d="M0 6.500h12" stroke="#111" />
          </svg>
        </button>
        <button aria-label="Restore">
          <svg width="12" height="12" viewBox="0 0 12 12" fill="none" stroke="#111">
            <rect x=".5" y="2.500" width="9" height="9" rx="1.500" />
            <path d="M3 .5h6a2.500 2.500 0 012.500 2.500v6" />
          </svg>
        </button>
        <button aria-label="Close">
          <svg width="12" height="12" viewBox="0 0 12 12">
            <path d="M0 0l12 12M12 0L0 12" stroke="#111" />
          </svg>
        </button>
      </div>
    </header>
  );
}

function StatusBar() {
  return (
    <footer className="flex h-[26px] items-center border-t border-white bg-linear-to-b from-[#e3e6ea] to-[#bfc3c8]">
      <span className="pr-3 pl-2">Page: 1 of 3</span>
      <span className="h-[23px] w-px bg-[#85898f]" />
      <span className="px-[11px]">Words: 484</span>
      <span className="h-[23px] w-px bg-[#85898f]" />
      <svg width="20" height="18" viewBox="0 0 20 18" className="ml-2">
        <path d="M0 11l5-6c3-1 5 0 5 1 2-1 6 0 9 1l1 6-8 5c-4 0-9-3-12-7z" fill="#5d84cf" />
        <path d="M1 10l4-6c3 0 5 1 5 2 2-1 5-1 8 1l1 4-8 4c-4 0-7-2-10-5z" fill="#f4f6fa" stroke="#98a1b3" strokeWidth=".7" />
        <path d="M10 1l9 11M18 1l-6 11" stroke="#ee5436" strokeWidth="2.500" />
      </svg>
      <span className="pr-[10px] pl-[18px]">English (U.S.)</span>
      <span className="h-[23px] w-px bg-[#85898f]" />
      <span className="flex-1" />
      <span className="h-[23px] w-px bg-[#85898f]" />
      <button
        aria-label="Print layout"
        className="ml-[3px] flex h-6 w-[23px] items-center justify-center rounded-[3px] border border-[#c29a3c] bg-linear-to-b from-[#fbd36b] to-[#fff08a]"
      >
        <svg width="15" height="13" viewBox="0 0 15 13">
          <rect x=".5" y=".5" width="14" height="12" fill="#fff" stroke="#555" />
          <path d="M2 3.500h11M2 6h11M2 8.500h11M2 10.500h11" stroke="#555" />
        </svg>
      </button>
      <div className="flex items-center gap-[9px] pl-[5px]">
        <button aria-label="Full screen reading">
          <svg width="14" height="13" viewBox="0 0 14 13" fill="#fff" stroke="#555">
            <path d="M.5 1.500h5l1.500 1 1.500-1h5v9h-5L7 12l-1.500-1.500h-5zM7 2v10M2 4h3M2 6h3M2 8h3M9 4h3M9 6h3M9 8h3" />
          </svg>
        </button>
        <button aria-label="Web layout">
          <svg width="14" height="13" viewBox="0 0 14 13">
            <path d="M.5.500h11v9H.500zM2 3h8M2 5h8M2 7h5" fill="#fff" stroke="#555" />
            <circle cx="10" cy="9" r="4" fill="#2b6f9e" />
            <path d="M8 8l2-2 2 2-2 3z" fill="#57b56a" />
          </svg>
        </button>
        <button aria-label="Outline">
          <svg width="12" height="12" viewBox="0 0 12 12">
            <path d="M0 .5h1M2 .5h6M2 3.500h1M5 3.500h6M3 6.500h1M6 6.500h6M2 9.500h1M5 9.500h6M3 11.500h5" stroke="#666" />
          </svg>
        </button>
        <button aria-label="Draft">
          <svg width="13" height="12" viewBox="0 0 13 12">
            <path d="M0 .5h13M0 3.500h13M0 6h13M0 8.500h13M0 11.500h13" stroke="#666" />
          </svg>
        </button>
      </div>
      <button className="ml-[14px] w-[26px]">46%</button>
      <button aria-label="Zoom out" className="ml-2">
        <ZoomKnob d="M6 10h8" />
      </button>
      <div className="relative flex w-[125px] items-center">
        <span className="absolute left-[61px] h-2 w-px bg-[#7d828b]" />
        <input
          type="range"
          aria-label="Zoom"
          defaultValue={20}
          className="relative h-[17px] w-full appearance-none bg-[linear-gradient(#8b9099,#8b9099)] bg-size-[100%_1px] bg-center bg-no-repeat [&::-webkit-slider-thumb]:h-[16px] [&::-webkit-slider-thumb]:w-[11px] [&::-webkit-slider-thumb]:appearance-none [&::-webkit-slider-thumb]:border-2 [&::-webkit-slider-thumb]:border-[#f0b822] [&::-webkit-slider-thumb]:bg-[#ffe27a] [&::-webkit-slider-thumb]:[clip-path:polygon(0_0,100%_0,100%_70%,50%_100%,0_70%)]"
        />
      </div>
      <button aria-label="Zoom in">
        <ZoomKnob d="M5 10h10M10 5v10" />
      </button>
    </footer>
  );
}

function ZoomKnob({ d }: { d: string }) {
  return (
    <svg width="20" height="20" viewBox="0 0 20 20" className="block">
      <circle cx="10" cy="10" r="9.300" fill="#eef0f3" stroke="#71757c" strokeWidth="1.200" />
      <path d={d} stroke="#6a6f76" strokeWidth="2" />
    </svg>
  );
}

function ScrollBar() {
  return (
    <aside className="flex w-[17px] flex-col items-center bg-[#dfe3ea] pt-[4px]">
      <span className="h-[2px] w-[10px] bg-[#7c8188]" />
      <button aria-label="View ruler" className="mt-[3px] flex h-[21px] w-[17px] items-center justify-center border border-[#8b9097]">
        <svg width="12" height="12" viewBox="0 0 12 12" fill="#fff" stroke="#555">
          <path d="M.5 1.500h7v6h-7zM4.500 4.500h7v7h-4z" />
          <path d="M3 3l6 6" strokeDasharray="1 1" />
        </svg>
      </button>
      <button aria-label="Scroll up" className="flex h-[20px] w-full items-center justify-center">
        <svg width="11" height="6" viewBox="0 0 11 6">
          <path d="M0 6h11L5.500 0z" fill="#4a4d52" />
        </svg>
      </button>
      <div className="flex h-[681px] w-full flex-col items-center justify-center gap-[2px] border border-[#8b9097] bg-linear-to-r from-[#f7f8fa] to-[#dfe2e8]">
        <span className="h-px w-2 bg-[#777]" />
        <span className="h-px w-2 bg-[#777]" />
        <span className="h-px w-2 bg-[#777]" />
      </div>
      <button aria-label="Scroll down" className="flex flex-1 items-center justify-center pt-[6px]">
        <svg width="11" height="6" viewBox="0 0 11 6">
          <path d="M0 0h11L5.500 6z" fill="#4a4d52" />
        </svg>
      </button>
      <div className="flex h-[64px] w-full flex-col items-center justify-around border-t border-[#b4b8c0]">
        <button aria-label="Previous page">
          <svg width="6" height="7" viewBox="0 0 6 7">
            <path d="M0 3h6L3 0zM0 6h6L3 3z" fill="#333" stroke="#333" strokeWidth=".5" />
          </svg>
        </button>
        <button aria-label="Browse object">
          <svg width="8" height="8" viewBox="0 0 8 8">
            <circle cx="4" cy="4" r="3.200" fill="#cdd1d8" stroke="#555" />
          </svg>
        </button>
        <button aria-label="Next page">
          <svg width="6" height="7" viewBox="0 0 6 7">
            <path d="M0 1h6L3 4zM0 4h6L3 7z" fill="#333" stroke="#333" strokeWidth=".5" />
          </svg>
        </button>
      </div>
    </aside>
  );
}

export default function App() {
  return (
    <div className="flex min-h-screen flex-col overflow-hidden bg-white font-['Noto_Sans',sans-serif] text-[12px] text-[#3b3e44]">
      <TitleBar />
      <nav className="flex h-[30px] items-end gap-px">
        <button className="h-[30px] w-[70px] rounded-t-[3px] border border-[#1e4f9c] bg-linear-to-b from-[#3f7fd8] via-[#2558ae] to-[#3c82dc] text-white">
          File
        </button>
        <button className="-mb-px ml-[3px] h-[31px] w-[61px] rounded-t-[3px] border border-b-0 border-[#b6babf] bg-white">Home</button>
        {TABS.map((t) => (
          <button key={t} className="h-[30px] px-[14px]">
            {t}
          </button>
        ))}
        <span className="flex-1" />
        <button aria-label="Minimize ribbon" className="mr-[13px] mb-[11px]">
          <svg width="9" height="7" viewBox="0 0 9 7" fill="none" stroke="#555">
            <path d="M.5 4.500l4-4 4 4v2h-2l-2-2-2 2h-2z" />
          </svg>
        </button>
        <button
          aria-label="Help"
          className="mr-px mb-[7px] flex size-4 items-center justify-center rounded-full border border-[#2f62b5] bg-[#4f86dc] leading-4 font-bold text-white"
        >
          ?
        </button>
      </nav>
      <Ribbon />
      <main className="flex flex-1 bg-linear-to-b from-[#cdd0d5] to-[#b9bcc1]">
        <div className="flex w-[28px] flex-col items-center bg-[#cdd0d5] pt-[3px]">
          <button aria-label="Tab stop" className="mb-[8px] flex h-[28px] w-[28px] items-center justify-center border border-[#868b94]">
            <span className="flex size-[19px] items-center justify-center border border-[#868b94] bg-[#f6f7f8]">
              <span className="size-2 border-b-[3px] border-l-[3px] border-[#333]" />
            </span>
          </button>
          <SideRuler />
        </div>
        <div className="flex-1 pt-[5px]">
          <div className="grid grid-cols-[repeat(3,455px)] justify-center gap-x-[10px]">
            <div className="col-span-3 h-[35px]">
              <Ruler />
            </div>
            <Sheet>
              <Poster />
            </Sheet>
            <Sheet>
              <div dir="rtl" lang="fa" className="font-['DejaVu_Sans_Condensed','DejaVu_Sans',sans-serif] text-[11px] text-black">
                <h2 className="mb-[11px] leading-[23px] font-bold">کابل</h2>
                <div className="flex flex-col gap-[11px]">
                  {KABUL.map((p, i) => (
                    <Para key={i} lines={p.lines} size={p.height} />
                  ))}
                </div>
              </div>
            </Sheet>
            <Sheet>
              <div dir="rtl" lang="fa" className="font-['DejaVu_Sans_Condensed','DejaVu_Sans',sans-serif] text-[11px] text-black">
                <h2 className="mb-[6px] leading-[23px] font-bold">قدمت</h2>
                <Para lines={HISTORY} size="h-[426px]" />
              </div>
            </Sheet>
          </div>
        </div>
        <ScrollBar />
      </main>
      <div className="h-px bg-[#8b9097]" />
      <StatusBar />
      <div className="h-[2px] bg-[#d3edf0]" />
    </div>
  );
}
